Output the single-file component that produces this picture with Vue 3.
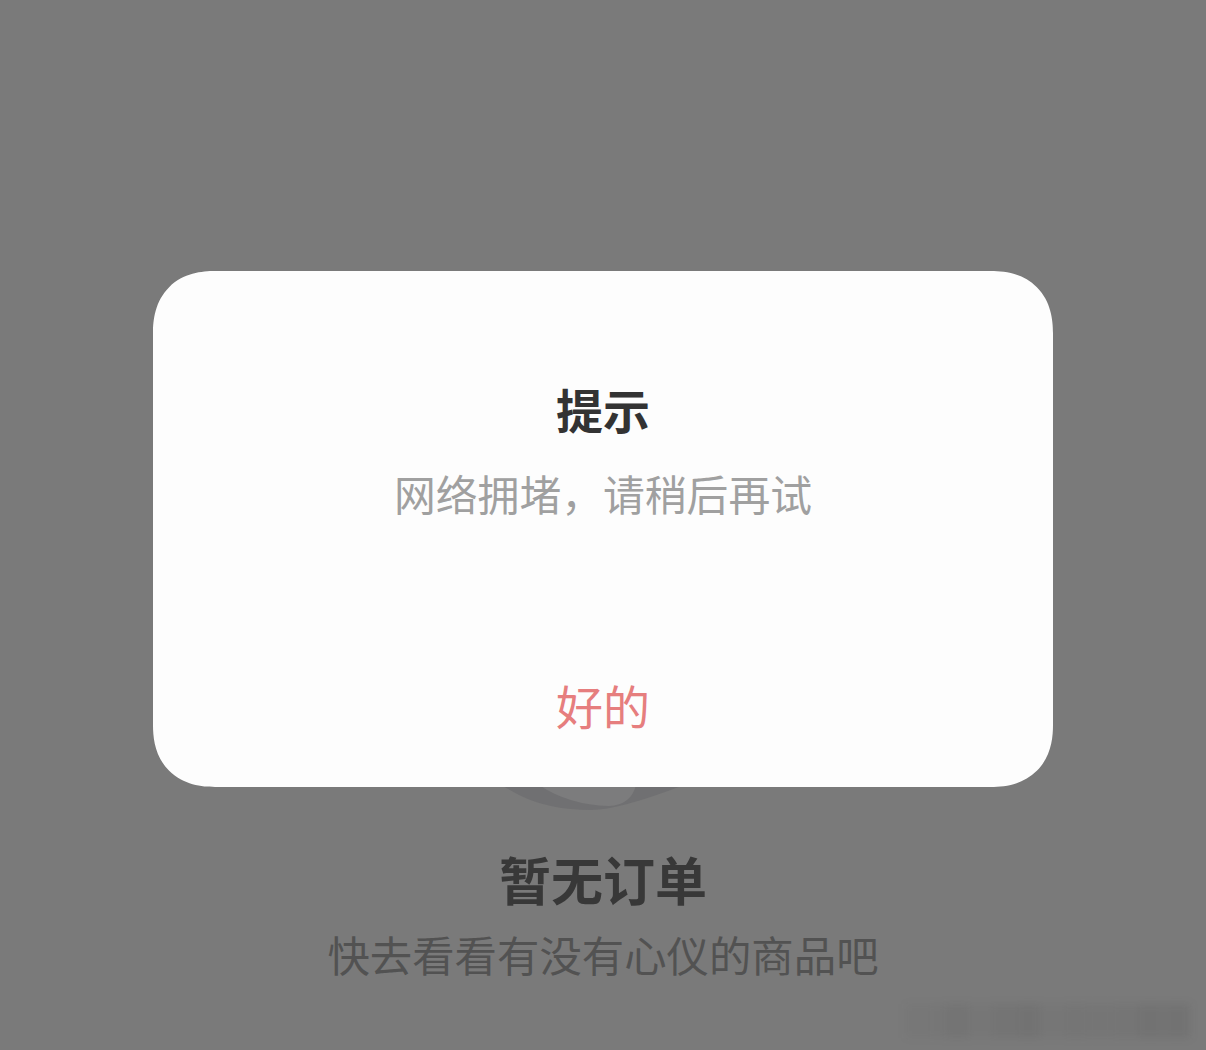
<script setup>
const marks = [
  { w: 22, o: 0.04 }, { w: 16, o: 0.05 }, { w: 24, o: 0.09 }, { w: 20, o: 0.05 }, { w: 24, o: 0.08 },
  { w: 24, o: 0.1 }, { w: 22, o: 0.05 }, { w: 24, o: 0.07 }, { w: 22, o: 0.06 }, { w: 24, o: 0.07 }, { w: 26, o: 0.1 }, { w: 26, o: 0.1 }
]
</script>

<template>
  <div class="page">
    <div class="empty">
      <svg class="art" width="190" height="30" viewBox="0 0 190 30">
        <path d="M2 0 L20 10 Q50 25 92 25 Q120 25 185 0 Z" fill="#707072" />
        <path d="M40 0 Q70 20 110 21 Q132 20 137 0 Z" fill="#7c7c7d" />
      </svg>
      <h2 class="empty-title">暂无订单</h2>
      <p class="empty-sub">快去看看有没有心仪的商品吧</p>
    </div>

    <div class="watermark">
      <span v-for="(m, i) in marks" :key="i" class="mark" :style="{ width: m.w + 'px', opacity: m.o }"></span>
    </div>

    <div class="dialog">
      <h1 class="title">提示</h1>
      <p class="message">网络拥堵，请稍后再试</p>
      <div class="action">好的</div>
    </div>
  </div>
</template>

<style>
html, body { margin: 0; background: #7a7a7a; }
</style>

<style scoped>
.page {
  position: relative;
  width: 1206px;
  height: 1050px;
  overflow: hidden;
  background: #7a7a7a;
  font-family: "Noto Sans CJK SC", "Noto Sans", sans-serif;
}
.empty {
  display: flex;
  flex-direction: column;
  align-items: center;
  padding-top: 785px;
}
.art { display: block; margin-left: -18px; }
.empty-title {
  margin: 29px 0 0;
  height: 70px;
  font-size: 52px;
  line-height: 70px;
  font-weight: 700;
  color: #383838;
}
.empty-sub {
  margin: 10px 0 0;
  font-size: 42.4px;
  line-height: 60px;
  font-weight: 400;
  color: #525252;
}
.watermark {
  position: absolute;
  left: 905px;
  top: 1004px;
  display: flex;
  gap: 1px;
  filter: blur(4px);
}
.mark {
  display: block;
  height: 34px;
  background: #333333;
}
.dialog {
  position: absolute;
  left: 153px;
  top: 271px;
  width: 900px;
  height: 516px;
  display: flex;
  flex-direction: column;
  align-items: center;
  background: #fdfdfd;
  border-radius: 62px;
  corner-shape: superellipse(1.2);
}
.title {
  margin: 106px 0 0;
  font-size: 47px;
  line-height: 64px;
  font-weight: 700;
  color: #333333;
}
.message {
  margin: 22px 0 0;
  font-size: 41.8px;
  line-height: 60px;
  font-weight: 400;
  color: #a0a0a0;
}
.action {
  margin-top: auto;
  margin-bottom: 50px;
  font-size: 47px;
  line-height: 64px;
  font-weight: 400;
  color: #e67e7e;
}
</style>
